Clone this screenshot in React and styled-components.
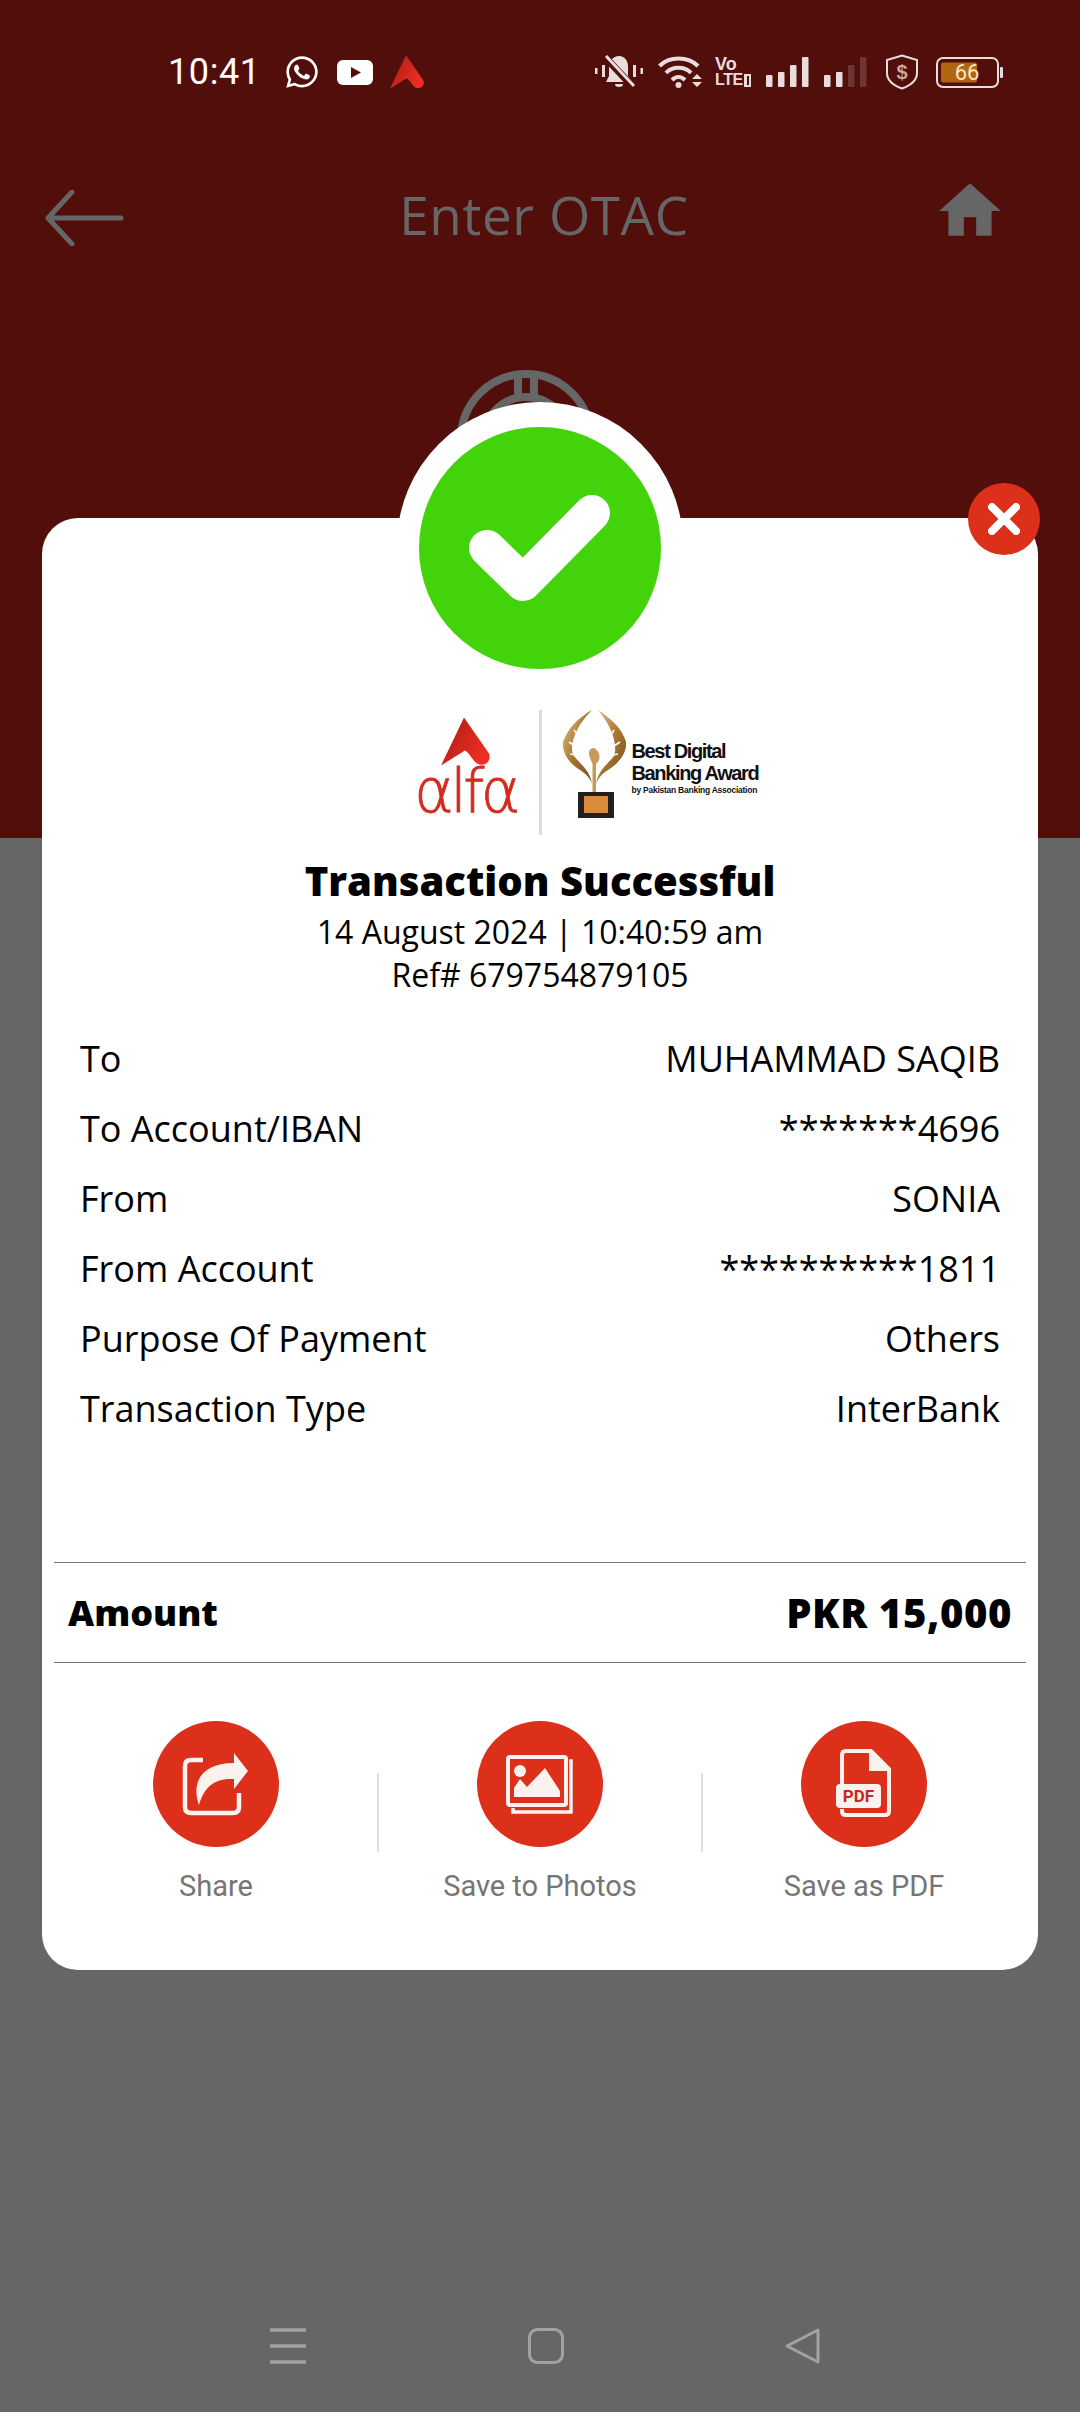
import styled, { createGlobalStyle } from 'styled-components'
import { FaWhatsapp } from 'react-icons/fa'
import { MdHome } from 'react-icons/md'

const GlobalStyle = createGlobalStyle`
  html, body {
    margin: 0;
    padding: 0;
    background: #666666;
  }
  * {
    box-sizing: border-box;
  }
`

const Screen = styled.div`
  position: relative;
  width: 1080px;
  height: 2412px;
  overflow: hidden;
  display: flex;
  flex-direction: column;
  background: #666666;
  font-family: "Open Sans", sans-serif;
`

const Header = styled.header`
  height: 838px;
  flex-shrink: 0;
  background: #520e0a;
  padding-top: 54px;
`

const StatusBar = styled.div`
  height: 36px;
  padding: 0 77px 0 168px;
  display: flex;
  align-items: center;
  justify-content: space-between;
  color: #fff;
`

const StatusGroup = styled.div`
  display: flex;
  align-items: center;
  gap: ${props => props.gap || 14}px;
`

const Clock = styled.span`
  font-family: Roboto, sans-serif;
  font-size: 36px;
  width: 104px;
  letter-spacing: 0.6px;
`

const WhatsappIcon = styled(FaWhatsapp)`
  width: 36px;
  height: 36px;
  margin-left: -5px;
`

const ShieldSlot = styled.div`
  display: flex;
  margin: 0 2px 0 3px;
`

const TopBar = styled.div`
  margin-top: 97px;
  height: 62px;
  padding: 0 80px 0 45px;
  display: flex;
  align-items: center;
  justify-content: space-between;
  color: #666666;
`

const PageTitle = styled.h1`
  margin: 0 0 6px 24px;
  font-weight: 400;
  font-size: 53px;
  line-height: 62px;
  letter-spacing: 0.6px;
  color: #666666;
`

const HomeIcon = styled(MdHome)`
  width: 74px;
  height: 74px;
  margin: -14px -7px 0;
`

const LockRing = styled.svg`
  display: block;
  margin: 119px 0 0 455px;
`

const Backdrop = styled.div`
  flex: 1;
`

const NavBar = styled.nav`
  height: 84px;
  padding: 0 259px 0 270px;
  display: flex;
  align-items: flex-start;
  justify-content: space-between;
`

const Card = styled.section`
  position: absolute;
  left: 42px;
  top: 518px;
  width: 996px;
  height: 1452px;
  padding-top: 192px;
  background: #fff;
  border-radius: 36px;
  color: #000;
`

const CheckBadge = styled.div`
  position: absolute;
  left: 355px;
  top: -116px;
  width: 286px;
  height: 286px;
  padding-top: 6px;
  border-radius: 50%;
  background: #fff;
  display: flex;
  align-items: center;
  justify-content: center;
`

const CloseButton = styled.button`
  position: absolute;
  right: -2px;
  top: -35px;
  width: 72px;
  height: 72px;
  padding: 0;
  border: 0;
  border-radius: 50%;
  background: #dc301b;
  display: flex;
  align-items: center;
  justify-content: center;
`

const LogoRow = styled.div`
  height: 125px;
  display: grid;
  grid-template-columns: 1fr 3px 1fr;
`

const AlfaLogo = styled.div`
  justify-self: end;
  width: 98px;
  margin-right: 24px;
  padding-top: 7px;
  display: flex;
  flex-direction: column;
  align-items: center;
`

const AlfaWord = styled.span`
  font-family: "DejaVu Sans", sans-serif;
  font-weight: 200;
  font-size: 60px;
  line-height: 50px;
  letter-spacing: -3.6px;
  color: #d42a20;
  -webkit-text-stroke: 0.8px #d42a20;
`

const LogoDivider = styled.div`
  background: #dcdcdc;
`

const Award = styled.div`
  margin-left: 20px;
  display: flex;
  align-items: flex-start;
  gap: 5px;
`

const AwardText = styled.div`
  margin-top: 30px;
  width: 128px;
  font-family: "Liberation Sans", sans-serif;
  font-weight: 700;
  color: #111;
`

const AwardLine = styled.div`
  font-size: 20px;
  line-height: 22px;
  letter-spacing: -1.35px;
  white-space: nowrap;
`

const AwardSub = styled.div`
  font-size: 8.5px;
  line-height: 12px;
  letter-spacing: -0.25px;
  white-space: nowrap;
`

const Title = styled.h2`
  margin: 17px 0 0;
  font-size: 40px;
  line-height: 58px;
  font-weight: 800;
  text-align: center;
`

const Meta = styled.div`
  font-size: 32px;
  line-height: ${props => props.lh}px;
  text-align: center;
`

const Rows = styled.div`
  margin-top: 27px;
  padding: 0 38px;
`

const Row = styled.div`
  height: 70px;
  display: flex;
  align-items: center;
  justify-content: space-between;
  font-size: 36px;
`

const AmountBar = styled.div`
  margin: 119px 12px 0;
  height: 101px;
  padding: 0 14px;
  border-top: 1.5px solid #777;
  border-bottom: 1.5px solid #777;
  display: flex;
  align-items: center;
  justify-content: space-between;
  font-size: 36px;
  font-weight: 800;
`

const AmountValue = styled.span`
  font-size: 40px;
  letter-spacing: 0.6px;
`

const Actions = styled.div`
  margin: 58px 12px 0;
  display: flex;
  align-items: flex-start;
`

const Action = styled.div`
  flex: 1;
  display: flex;
  flex-direction: column;
  align-items: center;
`

const ActionCircle = styled.div`
  width: 126px;
  height: 126px;
  border-radius: 50%;
  background: #dc301b;
`

const ActionLabel = styled.span`
  margin-top: 19px;
  font-family: Roboto, sans-serif;
  font-size: 29px;
  line-height: 40px;
  color: #757575;
`

const ActionDivider = styled.div`
  width: 2px;
  height: 79px;
  margin: 52px -1px 0;
  background: #dedede;
`

const VolteBox = styled.div`
  width: 36px;
  height: 32px;
  margin-left: -3px;
  font-family: "Liberation Sans", sans-serif;
  font-weight: 700;
  color: #e8dcdc;
`

const VolteLine = styled.div`
  display: flex;
  align-items: center;
  font-size: ${props => props.size}px;
  line-height: 16px;
  letter-spacing: ${props => props.spacing}px;
  white-space: nowrap;
`

const VolteEnd = styled.span`
  width: 10px;
  height: 13px;
  margin-left: 1px;
  border: 2.5px solid #e8dcdc;
  border-left-width: 3px;
`

const rows = [
  ['To', 'MUHAMMAD SAQIB'],
  ['To Account/IBAN', '*******4696'],
  ['From', 'SONIA'],
  ['From Account', '**********1811'],
  ['Purpose Of Payment', 'Others'],
  ['Transaction Type', 'InterBank'],
]

function AlfaMark({ size = 49, id = 'alfaA' }) {
  return (
    <svg width={size} height={size} viewBox="0 0 49 48">
      <defs>
        <linearGradient id={id} x1="0" y1="0" x2="1" y2="0.6">
          <stop offset="0" stopColor="#a81c14" />
          <stop offset="1" stopColor="#ee2e24" />
        </linearGradient>
      </defs>
      <path d="M23 0 L48 36 C51 44 43 50 36 46 C31 42 29 36 24 33 L0 48 Z" fill={`url(#${id})`} />
    </svg>
  )
}

function YoutubeIcon() {
  return (
    <svg width="36" height="25" viewBox="0 0 36 25">
      <rect width="36" height="25" rx="6" fill="#fff" />
      <path d="M14 7 L24 12.5 L14 18 Z" fill="#520e0a" />
    </svg>
  )
}

function BellOffIcon() {
  return (
    <svg width="48" height="34" viewBox="0 0 48 34" fill="#e8dcdc">
      <rect x="0" y="13" width="2.5" height="6" />
      <rect x="7" y="10" width="3" height="12" />
      <rect x="38" y="10" width="3" height="12" />
      <rect x="45.5" y="13" width="2.5" height="6" />
      <path d="M24 1 C30 1 33 6 33 12 L33 21 L37 27 L11 27 L14 21 L14 12 C14 6 18 1 24 1 Z" />
      <path d="M20 29 h8 a4 3 0 0 1 -8 0 Z" />
      <path d="M10 2 L38 32" stroke="#520e0a" strokeWidth="7" />
      <path d="M11 1 L39 31" stroke="#e8dcdc" strokeWidth="3" />
    </svg>
  )
}

function WifiIcon() {
  return (
    <svg width="45" height="34" viewBox="0 0 45 34" fill="none" stroke="#e8dcdc" strokeWidth="4">
      <path d="M1.5 11 C11 1 30 1 40 11" />
      <path d="M8 18 C14 11 27 11 33 18" />
      <path d="M14 25 C18 21 23 21 27 25" />
      <circle cx="20.5" cy="30" r="3" fill="#e8dcdc" stroke="none" />
      <path d="M34 24 L39 19 L44 24 Z M34 27 L44 27 L39 32 Z" fill="#e8dcdc" stroke="none" />
    </svg>
  )
}

function SignalIcon({ faded = 0 }) {
  const bars = [12, 15, 22, 30]
  return (
    <svg width="43" height="30" viewBox="0 0 43 30">
      {bars.map((h, i) => (
        <rect
          key={i}
          x={i * 12}
          y={30 - h}
          width="6.5"
          height={h}
          rx="1"
          fill={i >= 4 - faded ? '#6d3533' : '#e8dcdc'}
        />
      ))}
    </svg>
  )
}

function ShieldIcon() {
  return (
    <svg width="34" height="36" viewBox="0 0 34 36" fill="none">
      <path d="M17 1.5 L32 6 L32 19 C32 27 24 32 17 34.5 C10 32 2 27 2 19 L2 6 Z" stroke="#e8dcdc" strokeWidth="2" />
      <text x="17" y="24.5" textAnchor="middle" fontFamily="Liberation Sans, sans-serif" fontWeight="700" fontSize="20" fill="#c7a5a3">$</text>
    </svg>
  )
}

function BatteryIcon() {
  return (
    <svg width="67" height="31" viewBox="0 0 67 31">
      <rect x="1" y="1" width="61" height="29" rx="6" fill="none" stroke="#e8dcdc" strokeWidth="2" />
      <rect x="5" y="5.5" width="36" height="20" rx="2" fill="#b0660f" />
      <rect x="64" y="10" width="3" height="11" rx="1" fill="#e8dcdc" />
      <text x="31" y="23" textAnchor="middle" fontFamily="Roboto, sans-serif" fontSize="22" fill="#f6e7c8">66</text>
    </svg>
  )
}

function TrophyIcon() {
  return (
    <svg width="65" height="108" viewBox="0 0 65 108" fill="none">
      <defs>
        <linearGradient id="gold" x1="0" y1="0" x2="1" y2="1">
          <stop offset="0" stopColor="#e2c48f" />
          <stop offset="0.5" stopColor="#a9762f" />
          <stop offset="1" stopColor="#6d4a1c" />
        </linearGradient>
      </defs>
      <path d="M30 0 C16 8 6 18 1 32 C0 44 8 54 18 60 C24 64 28 68 30 74 C28 60 18 54 12 46 C6 36 14 16 30 0 Z" fill="url(#gold)" />
      <path d="M36 0 C48 8 60 18 64 32 C65 44 56 54 46 60 C40 64 36 68 34 74 C36 60 46 54 52 46 C56 36 50 16 36 0 Z" fill="url(#gold)" />
      <path d="M12 20 L20 30 M7 32 L16 38 M8 44 L18 46 M52 20 L46 30 M58 32 L49 38 M56 44 L46 46" stroke="#fff" strokeWidth="1.6" />
      <path d="M32 38 C27 38 26 43 28 48 L30.5 54 L30.5 82 L34 82 L34 54 C39 50 39 42 32 38 Z" fill="#c79a58" />
      <rect x="16" y="82" width="36" height="26" fill="#22201e" />
      <rect x="22" y="86" width="24" height="17" fill="#d98a3a" />
    </svg>
  )
}

function ShareIcon() {
  return (
    <svg width="126" height="126" viewBox="0 0 126 126" fill="none">
      <path d="M50 39 L38 39 Q32 39 32 45 L32 86 Q32 92 38 92 L80 92 Q86 92 86 86 L86 72" stroke="#fbf2ee" strokeWidth="4.5" />
      <path d="M81 32 L95 50 L81 68 L81 58 C66 57 52 62 46 84 C38 62 48 42 81 42 Z" fill="#fbf2ee" />
    </svg>
  )
}

function PhotosIcon() {
  return (
    <svg width="126" height="126" viewBox="0 0 126 126" fill="none">
      <path d="M92 40 L94 40 L94 91 L36 91 L36 87" stroke="#fbf2ee" strokeWidth="3.5" />
      <rect x="31" y="36" width="58" height="48" rx="2" stroke="#fbf2ee" strokeWidth="4" />
      <circle cx="43" cy="50" r="6" fill="#fbf2ee" />
      <path d="M37 76 L37 67 L43 58 L50 66 L68 47 L83 70 L83 76 Z" fill="#fbf2ee" />
    </svg>
  )
}

function PdfIcon() {
  return (
    <svg width="126" height="126" viewBox="0 0 126 126" fill="none">
      <path d="M41 64 L41 34 Q41 30 45 30 L70 30 L88 48 L88 90 Q88 94 84 94 L45 94 Q41 94 41 90 L41 88" stroke="#fbf2ee" strokeWidth="4" />
      <path d="M68 30 L68 50 L88 50 Z" fill="#fbf2ee" />
      <rect x="35" y="63" width="45" height="24" rx="4" fill="#fbf2ee" />
      <text x="57.5" y="81" textAnchor="middle" fontFamily="Roboto, sans-serif" fontWeight="700" fontSize="17" fill="#c8281a">PDF</text>
    </svg>
  )
}

export default function App() {
  return (
    <>
      <GlobalStyle />
      <Screen>
        <Header>
          <StatusBar>
            <StatusGroup gap={17}>
              <Clock>10:41</Clock>
              <WhatsappIcon />
              <YoutubeIcon />
              <AlfaMark size={34} id="alfaStatus" />
            </StatusGroup>
            <StatusGroup gap={15}>
              <BellOffIcon />
              <WifiIcon />
              <VolteBox>
                <VolteLine size={18} spacing={0}>Vo</VolteLine>
                <VolteLine size={16} spacing={-0.4}>LTE<VolteEnd /></VolteLine>
              </VolteBox>
              <SignalIcon />
              <SignalIcon faded={2} />
              <ShieldSlot><ShieldIcon /></ShieldSlot>
              <BatteryIcon />
            </StatusGroup>
          </StatusBar>
          <TopBar>
            <svg width="79" height="56" viewBox="0 0 79 56" fill="none" stroke="#666666" strokeWidth="5" strokeLinecap="round" strokeLinejoin="round">
              <path d="M76 28 L3 28 M27 2 L3 28 L27 54" />
            </svg>
            <PageTitle>Enter OTAC</PageTitle>
            <HomeIcon />
          </TopBar>
          <LockRing width="142" height="142" viewBox="0 0 142 142" fill="none" stroke="#666666" strokeWidth="8">
            <circle cx="71" cy="71" r="65" />
            <circle cx="71" cy="71" r="42" />
            <path d="M63 6 L63 29 M79 6 L79 29" />
          </LockRing>
        </Header>
        <Backdrop />
        <NavBar>
          <svg width="36" height="36" viewBox="0 0 36 36" stroke="#a2a2a2" strokeWidth="3.5">
            <path d="M0 2 H36 M0 18 H36 M0 34 H36" />
          </svg>
          <svg width="36" height="36" viewBox="0 0 36 36" fill="none" stroke="#a2a2a2" strokeWidth="3">
            <rect x="1.5" y="1.5" width="33" height="33" rx="8" />
          </svg>
          <svg width="36" height="36" viewBox="0 0 36 36" fill="none" stroke="#a2a2a2" strokeWidth="3" strokeLinejoin="round">
            <path d="M33 2 L33 34 L2 18 Z" />
          </svg>
        </NavBar>

        <Card>
          <CheckBadge>
            <svg width="242" height="242" viewBox="0 0 242 242">
              <circle cx="121" cy="121" r="121" fill="#43d30b" />
              <path d="M68 121 L104 156 L173 86" fill="none" stroke="#fff" strokeWidth="36" strokeLinecap="round" strokeLinejoin="round" />
            </svg>
          </CheckBadge>
          <CloseButton aria-label="Close">
            <svg width="32" height="32" viewBox="0 0 32 32" stroke="#fff" strokeWidth="8" strokeLinecap="round">
              <path d="M4 4 L28 28 M28 4 L4 28" />
            </svg>
          </CloseButton>

          <LogoRow>
            <AlfaLogo>
              <AlfaMark />
              <AlfaWord>αlfα</AlfaWord>
            </AlfaLogo>
            <LogoDivider />
            <Award>
              <TrophyIcon />
              <AwardText>
                <AwardLine>Best Digital</AwardLine>
                <AwardLine>Banking Award</AwardLine>
                <AwardSub>by Pakistan Banking Association</AwardSub>
              </AwardText>
            </Award>
          </LogoRow>

          <Title>Transaction Successful</Title>
          <Meta lh={44}>14 August 2024 | 10:40:59 am</Meta>
          <Meta lh={42}>Ref# 679754879105</Meta>

          <Rows>
            {rows.map(([label, value]) => (
              <Row key={label}>
                <span>{label}</span>
                <span>{value}</span>
              </Row>
            ))}
          </Rows>

          <AmountBar>
            <span>Amount</span>
            <AmountValue>PKR 15,000</AmountValue>
          </AmountBar>

          <Actions>
            <Action>
              <ActionCircle><ShareIcon /></ActionCircle>
              <ActionLabel>Share</ActionLabel>
            </Action>
            <ActionDivider />
            <Action>
              <ActionCircle><PhotosIcon /></ActionCircle>
              <ActionLabel>Save to Photos</ActionLabel>
            </Action>
            <ActionDivider />
            <Action>
              <ActionCircle><PdfIcon /></ActionCircle>
              <ActionLabel>Save as PDF</ActionLabel>
            </Action>
          </Actions>
        </Card>
      </Screen>
    </>
  )
}
